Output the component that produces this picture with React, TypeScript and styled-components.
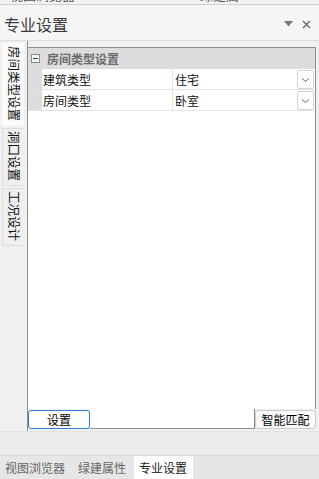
import styled, { createGlobalStyle } from "styled-components";

const GlobalStyle = createGlobalStyle`
  html, body { margin: 0; padding: 0; background: #f0f0f0; }
  body { font-family: "Noto Sans CJK SC", "Noto Sans", sans-serif; }
`;

const Frame = styled.div`
  width: 319px;
  height: 479px;
  display: flex;
  flex-direction: column;
  background: #f0f0f0;
  overflow: hidden;
  color: #222;
`;

const TopStrip = styled.div`
  height: 4px;
  overflow: hidden;
  border-bottom: 1px solid #cfcfcf;
  background: #f3f3f3;
  display: flex;
  font-size: 13px;
  color: #555;
`;

const CutText = styled.span<{ $left: number }>`
  margin-left: ${(p) => p.$left}px;
  margin-top: -12px;
  line-height: 14px;
`;

const Header = styled.div`
  height: 36px;
  display: flex;
  align-items: center;
  padding: 3px 6px 0 4px;
  box-sizing: border-box;
  background: #f5f5f5;
  border-bottom: 1px solid #dedede;
`;

const Title = styled.div`
  flex: 1;
  font-size: 16px;
  color: #3a3a3a;
`;

const HeadIcon = styled.span`
  width: 14px;
  display: flex;
  justify-content: center;
  color: #666;
  margin-left: 4px;
`;

const Body = styled.div`
  height: 390px;
  display: flex;
  background: #f0f0f0;
  border-bottom: 1px solid #e2e2e2;
`;

const TabColumn = styled.div`
  width: 27px;
  padding: 2px 0 0 2px;
  box-sizing: border-box;
  display: flex;
  flex-direction: column;
  gap: 2px;
`;

const SideTab = styled.div<{ $active?: boolean; $h: number }>`
  height: ${(p) => p.$h}px;
  width: 22px;
  box-sizing: border-box;
  background: ${(p) => (p.$active ? "#fbfbfb" : "#efefef")};
  border: 1px solid ${(p) => (p.$active ? "#fbfbfb" : "#dcdcdc")};
  border-right: none;
  writing-mode: vertical-rl;
  text-orientation: sideways;
  font-size: 12.5px;
  line-height: 20px;
  color: #111;
  padding-top: 2px;
`;

const Panel = styled.div`
  flex: 1;
  display: flex;
  flex-direction: column;
  padding: 6px 3px 2px 0;
  border-left: 1px solid #8b8b8b;
  background: #f0f0f0;
`;

const Grid = styled.div`
  flex: 1;
  background: #fff;
  border-top: 1px solid #8e8e8e;
  border-right: 1px solid #8e8e8e;
  display: flex;
  flex-direction: column;
`;

const GroupRow = styled.div`
  height: 21px;
  display: flex;
  align-items: center;
  background: #dddddd;
  font-size: 12px;
  font-weight: bold;
  color: #6a6a6a;
`;

const Toggle = styled.span`
  width: 7px;
  height: 7px;
  border: 1px solid #8a8a8a;
  background: #f4f4f4;
  margin: 0 7px 0 3px;
  position: relative;
  &::after {
    content: "";
    position: absolute;
    left: 1px;
    right: 1px;
    top: 3px;
    height: 1px;
    background: #444;
  }
`;

const PropRow = styled.div`
  height: 20px;
  display: flex;
  border-bottom: 1px solid #e3e3e3;
  font-size: 12px;
`;

const Gutter = styled.div`
  width: 14px;
  background: #dddddd;
`;

const Label = styled.div`
  width: 129px;
  border-right: 1px solid #e3e3e3;
  display: flex;
  align-items: center;
  padding-left: 1px;
  color: #111;
`;

const Value = styled.div`
  flex: 1;
  display: flex;
  align-items: center;
  padding-left: 2px;
  color: #111;
`;

const DropBtn = styled.div`
  width: 15px;
  height: 17px;
  margin: 1px 1px 0 auto;
  border: 1px solid #d4d4d4;
  border-radius: 2px;
  background: #fff;
  display: flex;
  align-items: center;
  justify-content: center;
`;

const Footer = styled.div`
  display: flex;
  align-items: flex-end;
  justify-content: space-between;
  height: 20px;
`;

const FooterLine = styled.div`
  flex: 1;
  height: 100%;
  background: #fff;
  border-bottom: 1px solid #8e8e8e;
  border-right: 1px solid #8e8e8e;
  box-sizing: border-box;
`;

const Button = styled.button<{ $primary?: boolean }>`
  height: 19px;
  padding: 0;
  box-sizing: border-box;
  border: 1px solid ${(p) => (p.$primary ? "#2b7fd6" : "#cdcdcd")};
  border-radius: 3px;
  background: ${(p) => (p.$primary ? "#fff" : "#fafafa")};
  font-family: "Noto Sans CJK SC", sans-serif;
  font-size: 12px;
  color: #000;
  line-height: 16px;
`;

const Gap = styled.div`
  flex: 1;
  background: #ebebeb;
  border-bottom: 1px solid #d8d8d8;
`;

const TabBar = styled.div`
  height: 23px;
  display: flex;
  align-items: stretch;
  background: #e6e6e6;
`;

const BottomTab = styled.div<{ $active?: boolean }>`
  display: flex;
  align-items: center;
  padding: 0 6px 0 5px;
  font-size: 12px;
  color: ${(p) => (p.$active ? "#222" : "#666")};
  background: ${(p) => (p.$active ? "#fff" : "transparent")};
  margin-right: 2px;
`;

const Chevron = () => (
  <svg width="9" height="6" viewBox="0 0 9 6">
    <path d="M1 1.5 L4.5 4.5 L8 1.5" fill="none" stroke="#666" strokeWidth="1" />
  </svg>
);

export default function App() {
  return (
    <>
      <GlobalStyle />
      <Frame>
        <TopStrip>
          <CutText $left={10}>视图浏览器</CutText>
          <CutText $left={125}>绿建属</CutText>
        </TopStrip>
        <Header>
          <Title>专业设置</Title>
          <HeadIcon>
            <svg width="9" height="6" viewBox="0 0 9 6">
              <path d="M0 0 H9 L4.5 5.5 Z" fill="#777" />
            </svg>
          </HeadIcon>
          <HeadIcon>
            <svg width="9" height="9" viewBox="0 0 9 9">
              <path d="M1 1 L8 8 M8 1 L1 8" stroke="#666" strokeWidth="1.3" />
            </svg>
          </HeadIcon>
        </Header>
        <Body>
          <TabColumn>
            <SideTab $active $h={83}>房间类型设置</SideTab>
            <SideTab $h={58}>洞口设置</SideTab>
            <SideTab $h={58}>工况设计</SideTab>
          </TabColumn>
          <Panel>
            <Grid>
              <GroupRow>
                <Toggle />
                房间类型设置
              </GroupRow>
              <PropRow>
                <Gutter />
                <Label>建筑类型</Label>
                <Value>
                  住宅
                  <DropBtn>
                    <Chevron />
                  </DropBtn>
                </Value>
              </PropRow>
              <PropRow>
                <Gutter />
                <Label>房间类型</Label>
                <Value>
                  卧室
                  <DropBtn>
                    <Chevron />
                  </DropBtn>
                </Value>
              </PropRow>
            </Grid>
            <Footer>
              <Button $primary style={{ width: 62 }}>设置</Button>
              <FooterLine />
              <Button style={{ width: 61 }}>智能匹配</Button>
            </Footer>
          </Panel>
        </Body>
        <Gap />
        <TabBar>
          <BottomTab>视图浏览器</BottomTab>
          <BottomTab>绿建属性</BottomTab>
          <BottomTab $active>专业设置</BottomTab>
        </TabBar>
      </Frame>
    </>
  );
}
